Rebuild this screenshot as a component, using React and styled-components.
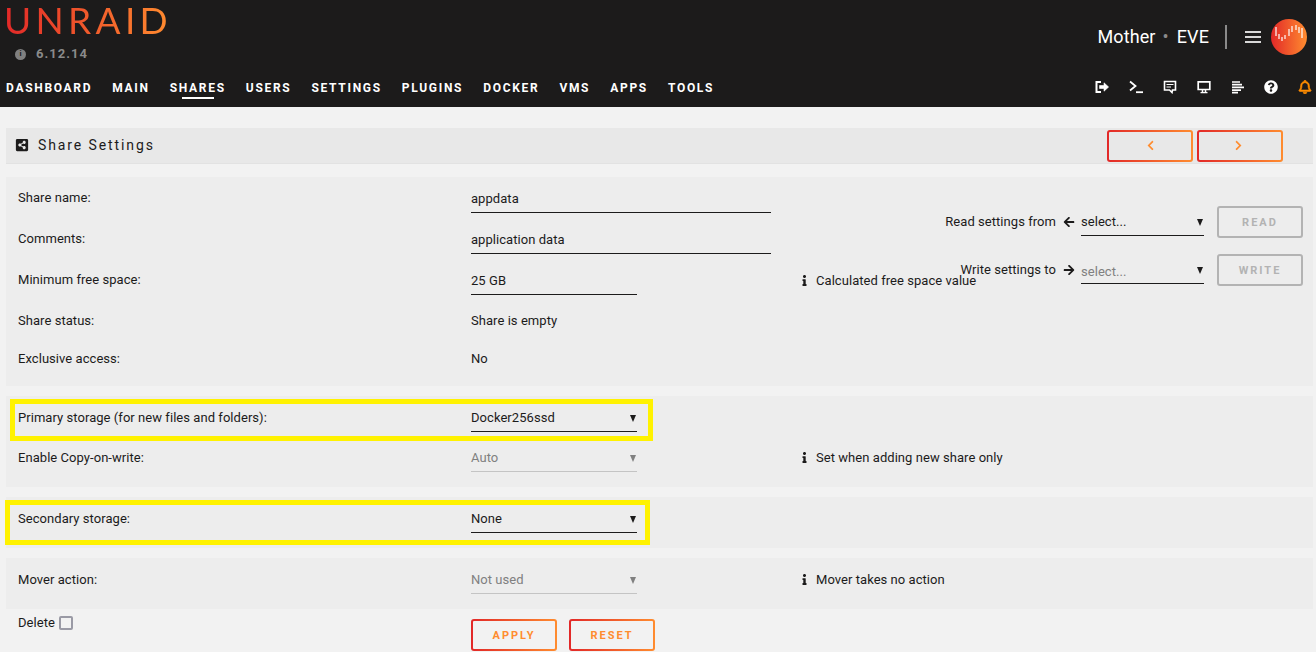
import React from 'react'
import styled, {createGlobalStyle} from 'styled-components'
import {
  FaArrowLeft,
  FaArrowRight,
  FaChevronLeft,
  FaChevronRight,
  FaInfo,
  FaQuestionCircle,
  FaRegBell,
  FaShareAltSquare,
} from 'react-icons/fa'

const navLinks = ['Dashboard', 'Main', 'Shares', 'Users', 'Settings', 'Plugins', 'Docker', 'VMs', 'Apps', 'Tools']
const waveBars = [
  [5, 5, 13],
  [8, 12, 16],
  [11, 15, 18],
  [14, 13, 16],
  [18, 7, 13],
  [21, 4, 9],
  [25, 3, 7],
  [28, 5, 10],
  [31, 6, 15],
]

function ShareRow({label, value, width, height, disabled, select, plain, info}) {
  return (
    <Row height={height}>
      <Label>{label}</Label>
      {plain ? (
        <PlainValue>{value}</PlainValue>
      ) : (
        <Field width={width} disabled={disabled}>
          {value}
          {select && <Caret disabled={disabled} />}
        </Field>
      )}
      {info && (
        <Info>
          <FaInfo size={11} />
          {info}
        </Info>
      )}
    </Row>
  )
}

export default function App() {
  return (
    <>
      <GlobalStyle />
      <Header>
        <TopBar>
          <Brand>
            <Logo>UNRAID</Logo>
            <Version>
              <VersionDot>i</VersionDot>
              6.12.14
            </Version>
          </Brand>
          <ServerArea>
            <ServerName>
              Mother<Dot>•</Dot>EVE
            </ServerName>
            <Divider />
            <Burger>
              <span />
              <span />
              <span />
            </Burger>
            <Avatar>
              <svg width="36" height="36" viewBox="0 0 36 36">
                {waveBars.map(([x, y1, y2]) => (
                  <line key={x} x1={x} x2={x} y1={y1 + 3} y2={y2 + 4} stroke="#fff" strokeWidth="1.4" opacity="0.85" />
                ))}
              </svg>
            </Avatar>
          </ServerArea>
        </TopBar>
        <NavBar>
          <NavList>
            {navLinks.map((link) => (
              <NavItem key={link} active={link === 'Shares'}>
                {link}
              </NavItem>
            ))}
          </NavList>
          <NavIcons>
            <NavIcon>
              <svg width="14" height="14" viewBox="0 0 14 14" fill="none" stroke="#fff">
                <path d="M6 2H1.5v10H6" strokeWidth="2" />
                <path d="M4.5 5.5H9V2.8L13.6 7 9 11.2V8.5H4.5z" fill="#fff" strokeWidth="0.6" />
              </svg>
            </NavIcon>
            <NavIcon>
              <svg width="14" height="14" viewBox="0 0 14 14" fill="none" stroke="#fff" strokeWidth="1.8">
                <path d="M1 1.5 6.5 6 1 10.5" />
                <path d="M7 12.2h7" />
              </svg>
            </NavIcon>
            <NavIcon>
              <svg width="14" height="14" viewBox="0 0 14 14" fill="none" stroke="#fff">
                <path d="M1.5 1.5h11v8.5H9.5l-.5 2.5L6.5 10h-5z" strokeWidth="1.6" />
                <path d="M3.5 4.5h7M3.5 7h4.5" strokeWidth="1.2" />
              </svg>
            </NavIcon>
            <NavIcon>
              <svg width="14" height="14" viewBox="0 0 14 14" fill="none" stroke="#fff">
                <path d="M1.2 1.8h11.6v7.7H1.2z" strokeWidth="1.7" />
                <path d="M5.5 10v2M8.5 10v2" strokeWidth="1.5" />
                <path d="M3.5 12.6h7" strokeWidth="1.3" />
              </svg>
            </NavIcon>
            <NavIcon>
              <svg width="14" height="14" viewBox="0 0 14 14" fill="none" stroke="#fff" strokeWidth="1.7">
                <path d="M1 2h8M1 4.7h10M1 7.4h12M1 10.1h9M1 12.6h6" />
              </svg>
            </NavIcon>
            <NavIcon>
              <FaQuestionCircle size={14} />
            </NavIcon>
            <NavIcon warn>
              <FaRegBell size={14} stroke="currentColor" strokeWidth={24} />
            </NavIcon>
          </NavIcons>
        </NavBar>
      </Header>
      <Page>
        <TitleBar>
          <Title>
            <FaShareAltSquare size={14} />
            Share Settings
          </Title>
          <Pager>
            <GradientButton wide>
              <FaChevronLeft size={11} />
            </GradientButton>
            <GradientButton wide>
              <FaChevronRight size={11} />
            </GradientButton>
          </Pager>
        </TitleBar>

        <Panel first>
          <ShareRow label="Share name:" value="appdata" width={300} />
          <ShareRow label="Comments:" value="application data" width={300} />
          <ShareRow label="Minimum free space:" value="25 GB" width={166} info="Calculated free space value" />
          <ShareRow label="Share status:" value="Share is empty" height={38} plain />
          <ShareRow label="Exclusive access:" value="No" height={48} plain />
          <CloneBox>
            <CloneRow>
              <CloneLabel>
                Read settings from
                <FaArrowLeft size={12} />
              </CloneLabel>
              <CloneSelect>
                select...
                <Caret />
              </CloneSelect>
              <MutedButton>Read</MutedButton>
            </CloneRow>
            <CloneRow>
              <CloneLabel>
                Write settings to
                <FaArrowRight size={12} />
              </CloneLabel>
              <CloneSelect muted>
                select...
                <Caret />
              </CloneSelect>
              <MutedButton>Write</MutedButton>
            </CloneRow>
          </CloneBox>
        </Panel>

        <Panel>
          <ShareRow
            label="Primary storage (for new files and folders):"
            value="Docker256ssd"
            width={166}
            height={40}
            select
          />
          <ShareRow
            label="Enable Copy-on-write:"
            value="Auto"
            width={166}
            height={51}
            select
            disabled
            info="Set when adding new share only"
          />
          <Highlight primary />
        </Panel>

        <Panel>
          <ShareRow label="Secondary storage:" value="None" width={166} height={51} select />
          <Highlight />
        </Panel>

        <Panel>
          <ShareRow
            label="Mover action:"
            value="Not used"
            width={166}
            height={51}
            select
            disabled
            info="Mover takes no action"
          />
        </Panel>

        <Actions>
          <DeleteLabel>
            Delete
            <Checkbox />
          </DeleteLabel>
          <ActionButtons>
            <GradientButton>Apply</GradientButton>
            <GradientButton>Reset</GradientButton>
          </ActionButtons>
        </Actions>
      </Page>
    </>
  )
}

const GlobalStyle = createGlobalStyle`
  html, body {
    margin: 0;
    height: 652px;
    overflow: hidden;
    background: #f2f2f2;
    color: #1c1b1b;
    font: 13px/16px Roboto, "Noto Sans", sans-serif;
    letter-spacing: 0.05px;
  }
`

const Header = styled.header`
  height: 107px;
  background: #1c1b1b;
  color: #fff;
`

const TopBar = styled.div`
  display: flex;
  justify-content: space-between;
  height: 72px;
`

const Brand = styled.div`
  padding-left: 4px;
`

const Logo = styled.div`
  width: max-content;
  font: 400 37px/40px Lato, sans-serif;
  letter-spacing: 4.3px;
  background: linear-gradient(90deg, #e22828, #ff8c2f);
  -webkit-background-clip: text;
  background-clip: text;
  color: transparent;
`

const Version = styled.div`
  display: flex;
  align-items: center;
  gap: 10px;
  margin: 6px 0 0 11px;
  color: #8a8a8a;
  font-weight: 700;
  font-size: 13px;
  letter-spacing: 1px;
`

const VersionDot = styled.span`
  display: flex;
  align-items: center;
  justify-content: center;
  width: 11px;
  height: 11px;
  border-radius: 50%;
  background: #808080;
  color: #1c1b1b;
  font-size: 8px;
  letter-spacing: 0;
`

const ServerArea = styled.div`
  display: flex;
  align-items: center;
  height: 74px;
  padding-right: 9px;
`

const ServerName = styled.div`
  font-size: 18px;
  letter-spacing: 0.1px;
`

const Dot = styled.span`
  margin: 0 8px 0 7px;
  color: #8a8a8a;
  font-size: 18px;
`

const Divider = styled.div`
  width: 2px;
  height: 24px;
  margin: 0 18px 0 16px;
  background: #8a8a8a;
`

const Burger = styled.div`
  display: flex;
  flex-direction: column;
  gap: 3.5px;
  width: 16px;
  margin-right: 10px;

  span {
    height: 1.5px;
    background: #d8d8d8;
  }
`

const Avatar = styled.div`
  width: 36px;
  height: 36px;
  border-radius: 50%;
  background: linear-gradient(90deg, #e22828, #ff8c2f);
`

const NavBar = styled.nav`
  display: flex;
  justify-content: space-between;
  align-items: center;
  height: 30px;
  padding-left: 6px;
`

const NavList = styled.div`
  display: flex;
  gap: 20px;
  margin-top: 1px;
`

const NavItem = styled.div`
  position: relative;
  font-size: 12px;
  font-weight: 700;
  letter-spacing: 1.7px;
  text-transform: uppercase;

  &::after {
    content: '';
    display: ${(props) => (props.active ? 'block' : 'none')};
    position: absolute;
    left: 12px;
    bottom: -3px;
    width: 32px;
    height: 2px;
    background: #fff;
  }
`

const NavIcons = styled.div`
  display: flex;
  align-items: center;
  margin-right: -6px;
`

const NavIcon = styled.div`
  display: flex;
  justify-content: center;
  width: 33.8px;
  color: ${(props) => (props.warn ? '#ff8c00' : '#fff')};
`

const Page = styled.main`
  padding: 21px 3px 0 6px;
`

const TitleBar = styled.div`
  display: flex;
  justify-content: space-between;
  align-items: center;
  height: 36px;
  background: #e8e8e8;
  border-bottom: 1px solid #e2e2e2;
  box-sizing: border-box;
  padding: 0 30px 0 9px;
`

const Title = styled.div`
  display: flex;
  align-items: center;
  gap: 9px;
  margin-top: -1px;
  font-size: 14px;
  letter-spacing: 1.9px;
`

const Pager = styled.div`
  display: flex;
  gap: 4px;

  > div:last-child svg {
    margin-right: 3px;
  }
`

const GradientButton = styled.div`
  display: flex;
  align-items: center;
  justify-content: center;
  box-sizing: border-box;
  width: 86px;
  height: 32px;
  padding-top: ${(props) => (props.wide ? 0 : '1px')};
  border: 2px solid transparent;
  border-radius: 3px;
  background: ${(props) =>
    props.wide
      ? 'linear-gradient(#e8e8e8, #e8e8e8) padding-box, linear-gradient(90deg, #e22828, #ff8c2f) border-box'
      : 'linear-gradient(#f2f2f2, #f2f2f2) padding-box, linear-gradient(90deg, #e22828, #ff8c2f) border-box'};
  color: #ff8c2f;
  font-size: 11px;
  font-weight: 700;
  letter-spacing: 2px;
  text-transform: uppercase;
`

const Row = styled.div`
  display: grid;
  grid-template-columns: 453px 330px 1fr;
  align-items: start;
  height: ${(props) => props.height || 41}px;
  padding-left: 12px;
  box-sizing: border-box;
`

const Label = styled.div`
  padding-top: 14px;
`

const PlainValue = styled.div`
  padding-top: 13px;
`

const Field = styled.div`
  position: relative;
  box-sizing: border-box;
  width: ${(props) => props.width}px;
  height: 36px;
  padding-top: 14px;
  border-bottom: 1px solid ${(props) => (props.disabled ? '#c4c4c4' : '#1c1b1b')};
  color: ${(props) => (props.disabled ? '#808080' : '#1c1b1b')};
`

const Caret = styled.i`
  position: absolute;
  right: 1px;
  bottom: 9px;
  width: 0;
  height: 0;
  border-left: 3px solid transparent;
  border-right: 3px solid transparent;
  border-top: 7px solid ${(props) => (props.disabled ? '#808080' : '#1c1b1b')};
`

const Info = styled.div`
  display: flex;
  align-items: center;
  gap: 6px;
  padding-top: 14px;

  svg {
    margin: -2px 0 0 -2px;
  }
`

const Panel = styled.section`
  position: relative;
  margin-top: ${(props) => (props.first ? '13px' : '10px')};
  background: #ededed;

  ${Label} {
    padding-top: ${(props) => (props.first ? '13px' : '14px')};
  }
`

const CloneBox = styled.div`
  position: absolute;
  top: 29px;
  right: 10px;
  display: flex;
  flex-direction: column;
  gap: 16px;
`

const CloneRow = styled.div`
  display: flex;
  align-items: center;
`

const CloneLabel = styled.div`
  display: flex;
  align-items: center;
  justify-content: flex-end;
  gap: 7px;
  width: 140px;
  margin-right: 5px;
`

const CloneSelect = styled.div`
  position: relative;
  box-sizing: border-box;
  width: 123px;
  height: 28px;
  margin-left: 1px;
  padding-top: ${(props) => (props.muted ? '8px' : '6px')};
  border-bottom: 1px solid #1c1b1b;
  color: ${(props) => (props.muted ? '#808080' : '#1c1b1b')};
`

const MutedButton = styled.div`
  display: flex;
  align-items: center;
  justify-content: center;
  box-sizing: border-box;
  width: 86px;
  height: 32px;
  margin-left: 13px;
  padding-top: 1px;
  border: 2px solid #b3b3b3;
  border-radius: 3px;
  color: #b3b3b3;
  font-size: 11px;
  font-weight: 700;
  letter-spacing: 2px;
  text-transform: uppercase;
`

const Highlight = styled.div`
  position: absolute;
  top: 3px;
  left: ${(props) => (props.primary ? '4px' : '-1px')};
  width: ${(props) => (props.primary ? '643px' : '645px')};
  height: ${(props) => (props.primary ? '42px' : '45px')};
  box-sizing: border-box;
  border: 5px solid #fff200;
`

const Actions = styled.div`
  display: grid;
  grid-template-columns: 453px 1fr;
  padding: 6px 0 0 12px;
`

const DeleteLabel = styled.div`
  display: flex;
  align-items: center;
  gap: 4px;
  height: 16px;
`

const Checkbox = styled.span`
  box-sizing: border-box;
  width: 14px;
  height: 14px;
  border: 2px solid #9a9aa5;
  border-radius: 2px;
`

const ActionButtons = styled.div`
  display: flex;
  gap: 12px;
  padding-top: 4px;
`
